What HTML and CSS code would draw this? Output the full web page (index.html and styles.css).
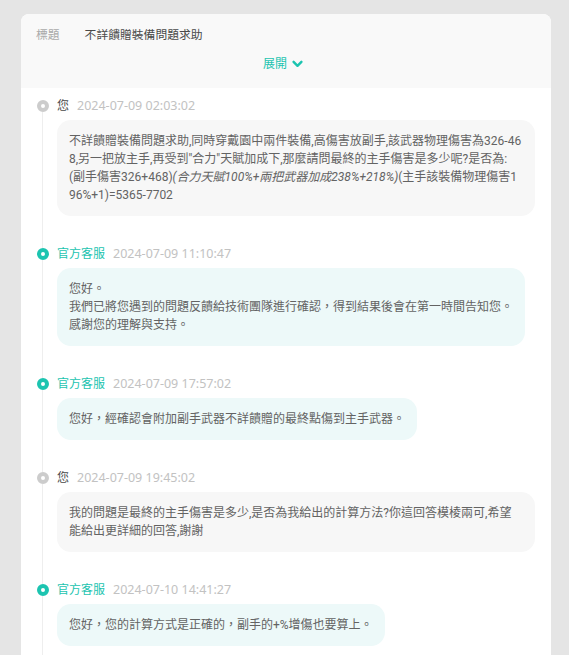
FILE: index.html
```html
<!DOCTYPE html>
<html lang="zh-Hant">
<head>
<meta charset="utf-8">
<link rel="stylesheet" href="styles.css">
</head>
<body>
<div class="page">
  <div class="card">
    <div class="card-head">
      <div class="title-row"><span class="label">標題</span><span class="title">不詳饋贈裝備問題求助</span></div>
      <div class="toggle"><span>展開</span><svg class="chev" width="11" height="8" viewBox="0 0 11 8"><path d="M1.6 1.8 L5.5 5.8 L9.4 1.8" fill="none" stroke="#1cc4b0" stroke-width="2.4" stroke-linecap="round" stroke-linejoin="round"/></svg></div>
    </div>
    <ul class="timeline">
      <li class="item user">
        <div class="meta"><span class="who">您</span><span class="time">2024-07-09 02:03:02</span></div>
        <div class="bubble">不詳饋贈裝備問題求助,同時穿戴園中兩件裝備,高傷害放副手,該武器物理傷害為326-468,另一把放主手,再受到"合力"天賦加成下,那麼請問最終的主手傷害是多少呢?是否為:<br>(副手傷害326+468)<em>(合力天賦100%+兩把武器加成238%+218%)</em>(主手該裝備物理傷害196%+1)=5365-7702</div>
      </li>
      <li class="item official">
        <div class="meta"><span class="who">官方客服</span><span class="time">2024-07-09 11:10:47</span></div>
        <div class="bubble">您好。<br>我們已將您遇到的問題反饋給技術團隊進行確認，得到結果後會在第一時間告知您。<br>感謝您的理解與支持。</div>
      </li>
      <li class="item official">
        <div class="meta"><span class="who">官方客服</span><span class="time">2024-07-09 17:57:02</span></div>
        <div class="bubble">您好，經確認會附加副手武器不詳饋贈的最終點傷到主手武器。</div>
      </li>
      <li class="item user">
        <div class="meta"><span class="who">您</span><span class="time">2024-07-09 19:45:02</span></div>
        <div class="bubble">我的問題是最終的主手傷害是多少,是否為我給出的計算方法?你這回答模棱兩可,希望能給出更詳細的回答,謝謝</div>
      </li>
      <li class="item official">
        <div class="meta"><span class="who">官方客服</span><span class="time">2024-07-10 14:41:27</span></div>
        <div class="bubble">您好，您的計算方式是正確的，副手的+%增傷也要算上。</div>
      </li>
    </ul>
  </div>
</div>
</body>
</html>
```

FILE: styles.css
```css
html, body {
  margin: 0;
  background: #e5e5e5;
  font-family: "Noto Sans", "Noto Sans CJK TC", sans-serif;
}

.page {
  padding: 14px 18px 0 21px;
}

.card {
  width: 530px;
  min-height: 641px;
  background: #ffffff;
  border-radius: 8px 8px 0 0;
  overflow: hidden;
}

.card-head {
  background: #f9f9f9;
  padding: 10px 15px 14px;
}

.title-row {
  display: flex;
  gap: 25px;
  font-size: 11.8px;
  line-height: 20px;
}

.label {
  color: #aaaaaa;
}

.title {
  color: #4a4a4a;
}

.toggle {
  margin-top: 10px;
  display: flex;
  justify-content: center;
  align-items: center;
  gap: 5px;
  padding-right: 6px;
  font-size: 12px;
  line-height: 20px;
  color: #1cc4b0;
}

.chev {
  display: block;
}

.timeline {
  list-style: none;
  margin: 0;
  padding: 8px 16px 0 36px;
}

.item {
  position: relative;
  display: flex;
  flex-direction: column;
  align-items: flex-start;
}

.item + .item {
  margin-top: 28px;
}

.item::before {
  content: "";
  position: absolute;
  left: -20px;
  top: 4px;
  width: 12px;
  height: 12px;
  box-sizing: border-box;
  border-radius: 50%;
  border: 4px solid #cccccc;
  background: #ffffff;
  z-index: 1;
}

.item.official::before {
  border-color: #1cc4b0;
}

.item::after {
  content: "";
  position: absolute;
  left: -15px;
  top: 16px;
  bottom: -32px;
  width: 1px;
  background: #eeeeee;
}

.meta {
  display: flex;
  gap: 8px;
  font-size: 12px;
  line-height: 20px;
  margin-bottom: 4px;
}

.who {
  color: #4a4a4a;
}

.official .who {
  color: #1cc4b0;
}

.time {
  color: #c2c2c2;
  font-size: 12.5px;
}

.bubble {
  box-sizing: border-box;
  max-width: 478px;
  padding: 12px;
  border-radius: 14px;
  font-family: Roboto, "Noto Sans CJK TC", sans-serif;
  font-size: 12px;
  line-height: 18px;
  color: #636363;
  word-break: break-all;
}

.bubble em {
  font-style: italic;
}

.user .bubble {
  background: #f7f7f7;
}

.official .bubble {
  background: #edf9f9;
}
```
